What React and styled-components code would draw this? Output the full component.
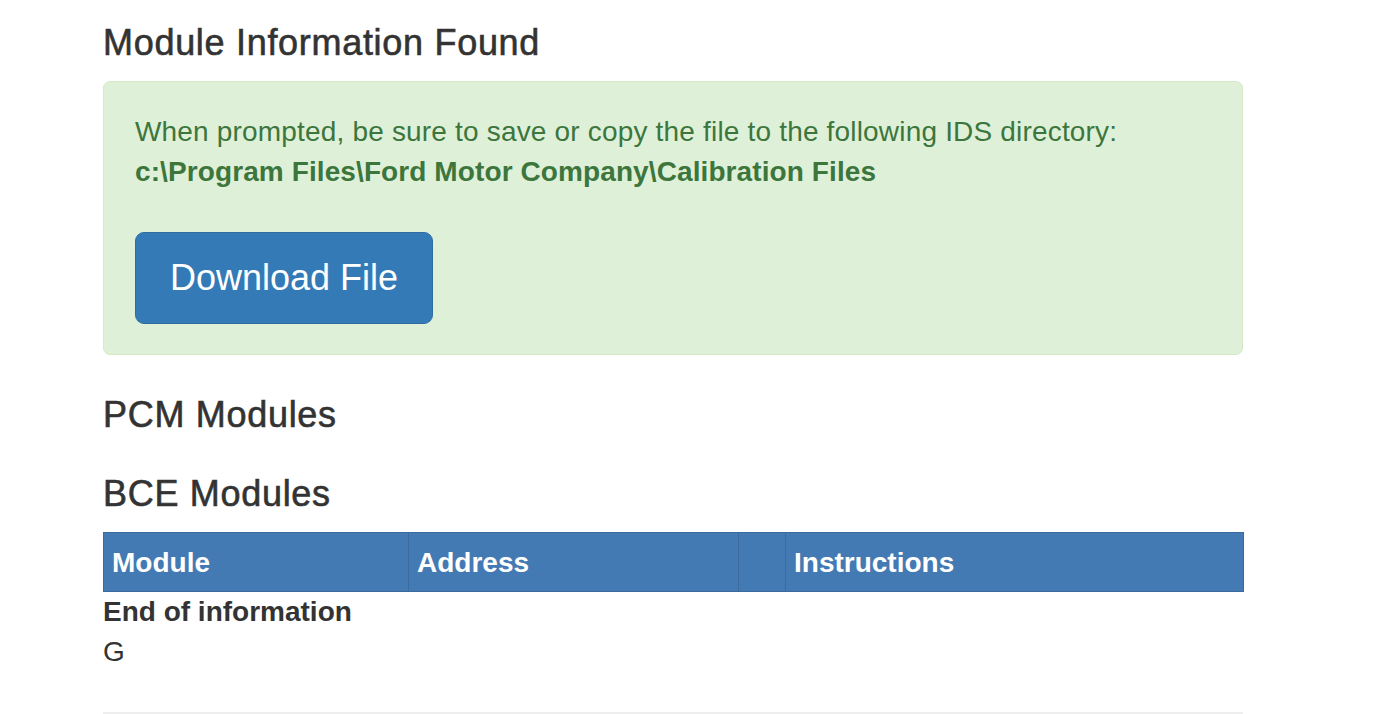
import React from 'react';
import styled, { createGlobalStyle } from 'styled-components';

const GlobalStyle = createGlobalStyle`
	body {
		margin: 0;
		background: #fff;
		color: #333;
		font-family: 'Liberation Sans', Arial, sans-serif;
		font-size: 28px;
		line-height: 40px;
	}
`;

const Container = styled.div`
	width: 1140px;
	margin-left: 103px;
	padding-top: 23px;
`;

const Heading = styled.h3`
	margin: ${props => props.top || 0}px 0 0;
	font-size: 36px;
	line-height: 40px;
	font-weight: 500;
	letter-spacing: 0.7px;
	color: #333;
	-webkit-text-stroke: 0.6px #333;
`;

const Alert = styled.div`
	margin-top: 18px;
	padding: 30px 31px;
	background: #dff0d8;
	border: 1px solid #d6e9c6;
	border-radius: 7px;
	color: #3c763d;
`;

const Prompt = styled.p`
	margin: 0 0 40px;
	letter-spacing: 0.18px;
`;

const Path = styled.strong`
	display: block;
	font-weight: 700;
	letter-spacing: 0.1px;
`;

const Button = styled.button`
	display: inline-block;
	padding: 21px 34px;
	font-family: inherit;
	font-size: 36px;
	line-height: 48px;
	color: #fff;
	background: #337ab7;
	border: 1px solid #2e6da4;
	border-radius: 9px;
	cursor: pointer;

	&:hover {
		background: #286090;
	}
`;

const Table = styled.table`
	width: 100%;
	margin-top: 18px;
	border-collapse: collapse;
	table-layout: fixed;
`;

const HeadCell = styled.th`
	box-sizing: border-box;
	width: ${props => props.w}px;
	padding: 10px 8px 8px;
	text-align: left;
	font-weight: 700;
	line-height: 40px;
	color: #fff;
	background: #437ab3;
	border: 1px solid #3a6a9e;
`;

const EndNote = styled.div`
	font-weight: 700;
`;

const Plain = styled.div`
	letter-spacing: 0.2px;
`;

const Rule = styled.hr`
	margin: 40px 0 0;
	border: 0;
	border-top: 2px solid #eee;
`;

const columns = [
	{ label: 'Module', w: 305 },
	{ label: 'Address', w: 330 },
	{ label: '', w: 47 },
	{ label: 'Instructions', w: 458 },
];

const App = () => {
	return (
		<>
			<GlobalStyle />
			<Container>
				<Heading>Module Information Found</Heading>
				<Alert>
					<Prompt>
						When prompted, be sure to save or copy the file to the following IDS directory:
						<Path>c:\Program Files\Ford Motor Company\Calibration Files</Path>
					</Prompt>
					<Button>Download File</Button>
				</Alert>

				<Heading top={40}>PCM Modules</Heading>
				<Heading top={39}>BCE Modules</Heading>

				<Table>
					<thead>
						<tr>
							{columns.map((col, index) => (
								<HeadCell key={index} w={col.w}>
									{col.label}
								</HeadCell>
							))}
						</tr>
					</thead>
				</Table>
				<EndNote>End of information</EndNote>
				<Plain>G</Plain>
				<Rule />
			</Container>
		</>
	);
};

export default App;
